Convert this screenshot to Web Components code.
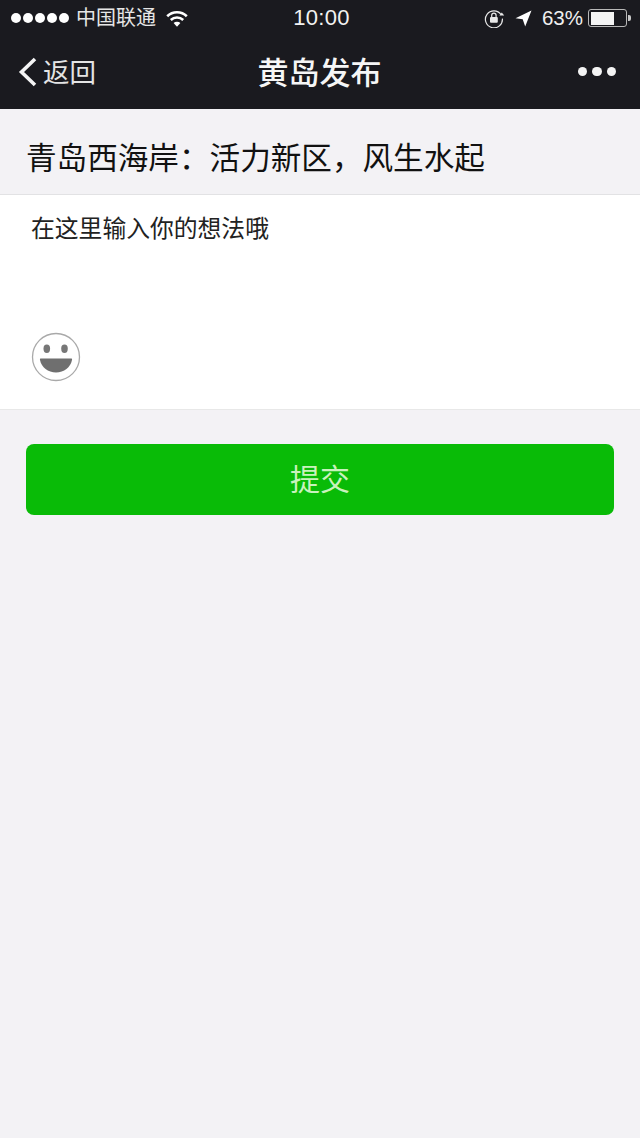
<!DOCTYPE html>
<html lang="zh-CN">
<head>
<meta charset="utf-8">
<title>黄岛发布</title>
<style>
  html, body { margin: 0; height: 100%; background: #f3f2f5; }
  body { font-family: "Liberation Sans", "Noto Sans CJK SC", sans-serif; }
</style>
</head>
<body>
<wx-header title-text="黄岛发布"></wx-header>
<wx-title>青岛西海岸：活力新区，风生水起</wx-title>
<wx-editor placeholder="在这里输入你的想法哦"></wx-editor>
<wx-button>提交</wx-button>

<script>
  customElements.define(
    "wx-status",
    class extends HTMLElement {
      constructor() {
        super().attachShadow({ mode: "open" });
      }

      connectedCallback() {
        this.shadowRoot.innerHTML = /*html*/ `
          <div class="left">
            <div class="dots"><i></i><i></i><i></i><i></i><i></i></div>
            <span class="carrier">中国联通</span>
            <svg width="22" height="17" viewBox="0 0 22 17" fill="none" stroke="#fff" stroke-width="2.6">
              <path d="M1.2 6.200a14 14 0 0 1 19.600 0"/>
              <path d="M4.800 10a9 9 0 0 1 12.400 0"/>
              <path d="M11 16.800l-3.400-3.700a4.800 4.800 0 0 1 6.800 0z" fill="#fff" stroke="none"/>
            </svg>
          </div>
          <div class="time">10:00</div>
          <div class="right">
            <svg width="21" height="20" viewBox="0 0 21 20" fill="none" stroke="#e8e8e8" stroke-width="1.200">
              <path d="M17 6.600A8.500 8.500 0 1 0 18.400 10.600"/>
              <path d="M15.400 7.400h4.800l-2.400-2.800z" fill="#e8e8e8" stroke="none"/>
              <rect x="6" y="9" width="7.800" height="5.800" rx="1" fill="#e8e8e8" stroke="none"/>
              <path d="M7.700 9V7.400a2.200 2.200 0 0 1 4.400 0V9"/>
            </svg>
            <svg class="arrow" width="17" height="17" viewBox="0 0 17 17">
              <path d="M16.500 .5 .5 8.200l7.200 1.100 2.500 7.200z" fill="#fff"/>
            </svg>
            <span class="pct">63%</span>
            <div class="battery"><div class="level"></div></div>
            <div class="cap"></div>
          </div>
          <style>
            :host {
              display: grid;
              grid-template-columns: 1fr auto 1fr;
              align-items: center;
              height: 36px;
              color: #f0f0f0;
              font-size: 20.5px;
            }
            .left, .right { display: flex; align-items: center; }
            .left { padding-left: 11px; }
            .right { justify-content: flex-end; padding-right: 9px; }
            .dots { display: flex; gap: 2px; }
            .dots i { width: 10px; height: 10px; border-radius: 50%; background: #fff; }
            .carrier { margin: 0 0 3px 7px; font-size: 20px; color: #e6e6e6; }
            .left svg { margin-left: 10px; }
            .time { margin-left: 3px; font-size: 22px; letter-spacing: .3px; color: #f2f2f2; }
            .right svg { flex: none; }
            .arrow { margin-left: 10px; }
            .pct { margin-left: 10px; }
            .battery {
              margin-left: 5px;
              box-sizing: border-box;
              width: 39px;
              height: 18px;
              padding: 1.5px;
              border: 1px solid #b8b8b8;
              border-radius: 3px;
            }
            .level { width: 23px; height: 100%; background: #f4f4f4; }
            .cap { width: 3px; height: 6px; margin-left: 1px; background: #c8c8c8; border-radius: 0 2px 2px 0; }
          </style>
        `;
      }
    }
  );

  customElements.define(
    "wx-header",
    class extends HTMLElement {
      constructor() {
        super().attachShadow({ mode: "open" });
      }

      connectedCallback() {
        this.shadowRoot.innerHTML = /*html*/ `
          <wx-status></wx-status>
          <div class="nav">
            <div class="back">
              <svg width="20" height="30" viewBox="0 0 20 30" fill="none" stroke="#f4f4f4" stroke-width="3.600">
                <path d="M17 2 3.500 15 17 28"/>
              </svg>
              <span>返回</span>
            </div>
            <div class="title">${this.getAttribute("title-text")}</div>
            <div class="more"><i></i><i></i><i></i></div>
          </div>
          <style>
            :host {
              display: block;
              height: 109px;
              background: #1a1a1f;
              color: #f4f4f4;
            }
            .nav {
              display: grid;
              grid-template-columns: 1fr auto 1fr;
              align-items: center;
              box-sizing: border-box;
              height: 73px;
              padding-bottom: 2px;
            }
            .back { display: flex; align-items: center; gap: 5px; padding-left: 18px; font-size: 26.500px; color: #e4e4e4; }
            .back span { margin-bottom: 2px; }
            .title { margin: 0 1px 3px 0; font-size: 31px; font-weight: 500; color: #f6f6f6; }
            .more { display: flex; justify-content: flex-end; gap: 5px; padding-right: 24px; }
            .more i { width: 9.500px; height: 9.500px; border-radius: 50%; background: #f4f4f4; }
          </style>
        `;
      }
    }
  );

  customElements.define(
    "wx-title",
    class extends HTMLElement {
      constructor() {
        super().attachShadow({ mode: "open" });
      }

      connectedCallback() {
        this.shadowRoot.innerHTML = /*html*/ `
          <slot></slot>
          <style>
            :host {
              display: flex;
              align-items: center;
              box-sizing: border-box;
              height: 86px;
              padding: 8px 0 0 26px;
              background: #f3f2f5;
              border-bottom: 1px solid #e2e2e4;
              color: #111;
              font-size: 30.600px;
            }
          </style>
        `;
      }
    }
  );

  customElements.define(
    "wx-editor",
    class extends HTMLElement {
      constructor() {
        super().attachShadow({ mode: "open" });
      }

      connectedCallback() {
        this.shadowRoot.innerHTML = /*html*/ `
          <div class="placeholder">${this.getAttribute("placeholder")}</div>
          <svg width="50" height="50" viewBox="0 0 50 50">
            <circle cx="25" cy="25" r="23.500" fill="#fff" stroke="#a9a9a9" stroke-width="1.300"/>
            <ellipse cx="15.800" cy="16.800" rx="3.300" ry="4.200" fill="#777"/>
            <ellipse cx="33.500" cy="16.800" rx="3.300" ry="4.200" fill="#777"/>
            <path d="M9.800 26.500h30.400c.8 0 1 .6.800 1.600C39.500 35.500 33 40.500 25 40.500S10.500 35.500 9 28.100c-.2-1 0-1.600.8-1.600z" fill="#6f6f6f"/>
          </svg>
          <style>
            :host {
              display: block;
              box-sizing: border-box;
              height: 215px;
              padding: 19px 0 0 31px;
              background: #fff;
              border-bottom: 1px solid #e8e8e8;
            }
            .placeholder { height: 118px; color: #222; font-size: 23.800px; line-height: 30px; }
            svg { display: block; }
          </style>
        `;
      }
    }
  );

  customElements.define(
    "wx-button",
    class extends HTMLElement {
      constructor() {
        super().attachShadow({ mode: "open" });
      }

      connectedCallback() {
        this.shadowRoot.innerHTML = /*html*/ `
          <div class="btn"><slot></slot></div>
          <style>
            :host { display: block; padding: 34px 26px 0; }
            .btn {
              display: flex;
              align-items: center;
              justify-content: center;
              box-sizing: border-box;
              height: 71px;
              padding-bottom: 6px;
              border-radius: 8px;
              background: #09bb07;
              color: #c9f2bd;
              font-size: 30px;
            }
          </style>
        `;
      }
    }
  );
</script>
</body>
</html>
